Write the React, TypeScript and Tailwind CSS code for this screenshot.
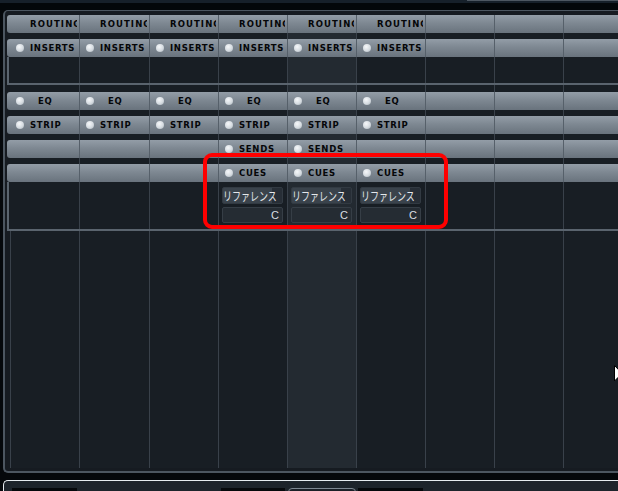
import clsx from "clsx";

const COLW = [
  "w-[69px]",
  "w-[70px]",
  "w-[69px]",
  "w-[69px]",
  "w-[69px]",
  "w-[69px]",
  "w-[69px]",
  "w-[69px]",
  "w-[69px]",
];

const label = "font-['DejaVu_Sans',sans-serif] font-bold text-[8.5px] leading-none text-[#050608]";

function Radio() {
  return (
    <span className="ml-[6px] size-[8px] shrink-0 rounded-full bg-[radial-gradient(circle_at_40%_35%,#f6f8fa,#d6dce1_55%,#a0aab3)]" />
  );
}

// header strip: text per column index, radio or not
function HeadRow({
  text,
  radio = true,
  indent = "ml-[6px]",
}: {
  text: Record<number, string>;
  radio?: boolean;
  indent?: string;
}) {
  return (
    <div className="flex h-[18px] shrink-0 rounded-l-[3px] bg-[linear-gradient(to_bottom,#939da7,#7e8892_45%,#69737d)]">
      <div className="w-[3px] shrink-0" />
      {COLW.map((w, i) => (
        <div
          key={i}
          className={clsx(
            w,
            "flex shrink-0 items-center overflow-hidden pr-[2px]",
            i > 0 && "border-l border-[#56606a]"
          )}
        >
          {text[i] &&
            (radio ? (
              <>
                <Radio />
                <span className={clsx(label, indent, "min-w-0 overflow-hidden whitespace-nowrap tracking-[0.7px]")}>
                  {text[i]}
                </span>
              </>
            ) : (
              <span className={clsx(label, "ml-[20px] min-w-0 overflow-hidden whitespace-nowrap tracking-[1.1px]")}>
                {text[i]}
              </span>
            ))}
        </div>
      ))}
    </div>
  );
}

function DarkCols({ first = false, cues = false }: { first?: boolean; cues?: boolean }) {
  return (
    <>
      {COLW.map((w, i) => (
        <div
          key={i}
          className={clsx(
            w,
            "shrink-0",
            (i > 0 || first) && "border-l border-[#39414a]",
            i === 4 ? "bg-[#232a31]" : "bg-[#181e24]"
          )}
        >
          {cues && i >= 3 && i <= 5 && <CueCell />}
        </div>
      ))}
    </>
  );
}

function Gap({ h }: { h: string }) {
  return (
    <div className={clsx("flex shrink-0", h)}>
      <div className="w-[3px] shrink-0" />
      <DarkCols />
    </div>
  );
}

function Section({ h, cues = false }: { h: string; cues?: boolean }) {
  return (
    <div className={clsx("flex shrink-0 border-b-2 border-l-2 border-[#5a646e]", h)}>
      <div className="w-[1px] shrink-0" />
      <DarkCols cues={cues} />
    </div>
  );
}

function CueCell() {
  return (
    <div className="flex flex-col gap-[3px] pl-[3px] pr-[4px] pt-[5px]">
      <div className="flex h-[17px] items-center overflow-hidden rounded-[2px] border border-[#323a42] bg-[linear-gradient(to_right,#3a434c_83%,#272e36_83%)]">
        <span className="origin-left scale-x-75 whitespace-nowrap font-['Noto_Sans_CJK_JP',sans-serif] text-[12px] leading-none text-[#e4e8eb]">
          リファレンス
        </span>
      </div>
      <div className="flex h-[16px] items-center justify-end rounded-[2px] border border-[#363e46] bg-[#252c33] pr-[3px]">
        <span className="font-['Liberation_Sans',sans-serif] text-[11px] leading-none text-[#d9dee2]">C</span>
      </div>
    </div>
  );
}

export default function App() {
  const six = { 0: "INSERTS", 1: "INSERTS", 2: "INSERTS", 3: "INSERTS", 4: "INSERTS", 5: "INSERTS" };
  return (
    <div className="relative h-[491px] w-[618px] overflow-hidden bg-[#05080b]">
      {/* top strip */}
      <div className="relative h-[10px]">
        <div className="h-[3px] bg-[#16202a]" />
        <div className="h-[7px] bg-[#03070a]" />
        <div className="absolute left-[467px] top-0 h-[1px] w-[160px] bg-[#4d5761]" />
      </div>

      {/* mixer frame */}
      <div className="ml-[3px] flex h-[463px] w-[660px] flex-col rounded-bl-[5px] rounded-tl-[5px] border-b-2 border-l-2 border-t border-[#4c5660] bg-[#161b21] pb-[3px] pl-[2px] pt-[4px]">
        <HeadRow radio={false} text={{ 0: "ROUTING", 1: "ROUTING", 2: "ROUTING", 3: "ROUTING", 4: "ROUTING", 5: "ROUTING" }} />
        <Gap h="h-[6px]" />
        <HeadRow text={six} />
        <Section h="h-[28px]" />
        <Gap h="h-[7px]" />
        <HeadRow indent="ml-[14px]" text={{ 0: "EQ", 1: "EQ", 2: "EQ", 3: "EQ", 4: "EQ", 5: "EQ" }} />
        <Gap h="h-[6px]" />
        <HeadRow text={{ 0: "STRIP", 1: "STRIP", 2: "STRIP", 3: "STRIP", 4: "STRIP", 5: "STRIP" }} />
        <Gap h="h-[6px]" />
        <HeadRow text={{ 3: "SENDS", 4: "SENDS" }} />
        <Gap h="h-[6px]" />
        <HeadRow text={{ 3: "CUES", 4: "CUES", 5: "CUES" }} />
        <Section h="h-[49px]" cues />
        <div className="flex min-h-0 flex-1">
          <div className="w-[3px] shrink-0" />
          <DarkCols first />
        </div>
      </div>

      {/* black gap + next panel */}
      <div className="h-[7px]" />
      <div className="ml-[3px] h-[11px] w-[660px] rounded-tl-[5px] border-l border-t border-[#e6ecf0] bg-[#1d242b]">
        <div className="mt-[7px] flex">
          <div className="ml-[8px] h-[10px] w-[65px] bg-[#05080b]" />
          <div className="ml-[144px] h-[10px] w-[64px] bg-[#06090c]" />
          <div className="ml-[3px] h-[10px] w-[68px] rounded-t-[4px] border border-[#7d8791] bg-[#1a2027]" />
          <div className="ml-[2px] h-[10px] w-[65px] bg-[#05080b]" />
        </div>
      </div>

      {/* red annotation */}
      <div className="absolute left-[203px] top-[153px] h-[76px] w-[245px] rounded-[9px] border-4 border-[#ff0000]" />

      {/* mouse cursor */}
      <svg className="absolute left-[614px] top-[365px]" width="12" height="19" viewBox="0 0 12 19">
        <path d="M0.5 0.5 L0.5 16 L4 12.5 L6.5 18 L8.5 17 L6 11.5 L11 11.5 Z" fill="#fff" stroke="#000" strokeWidth="1" />
      </svg>
    </div>
  );
}
